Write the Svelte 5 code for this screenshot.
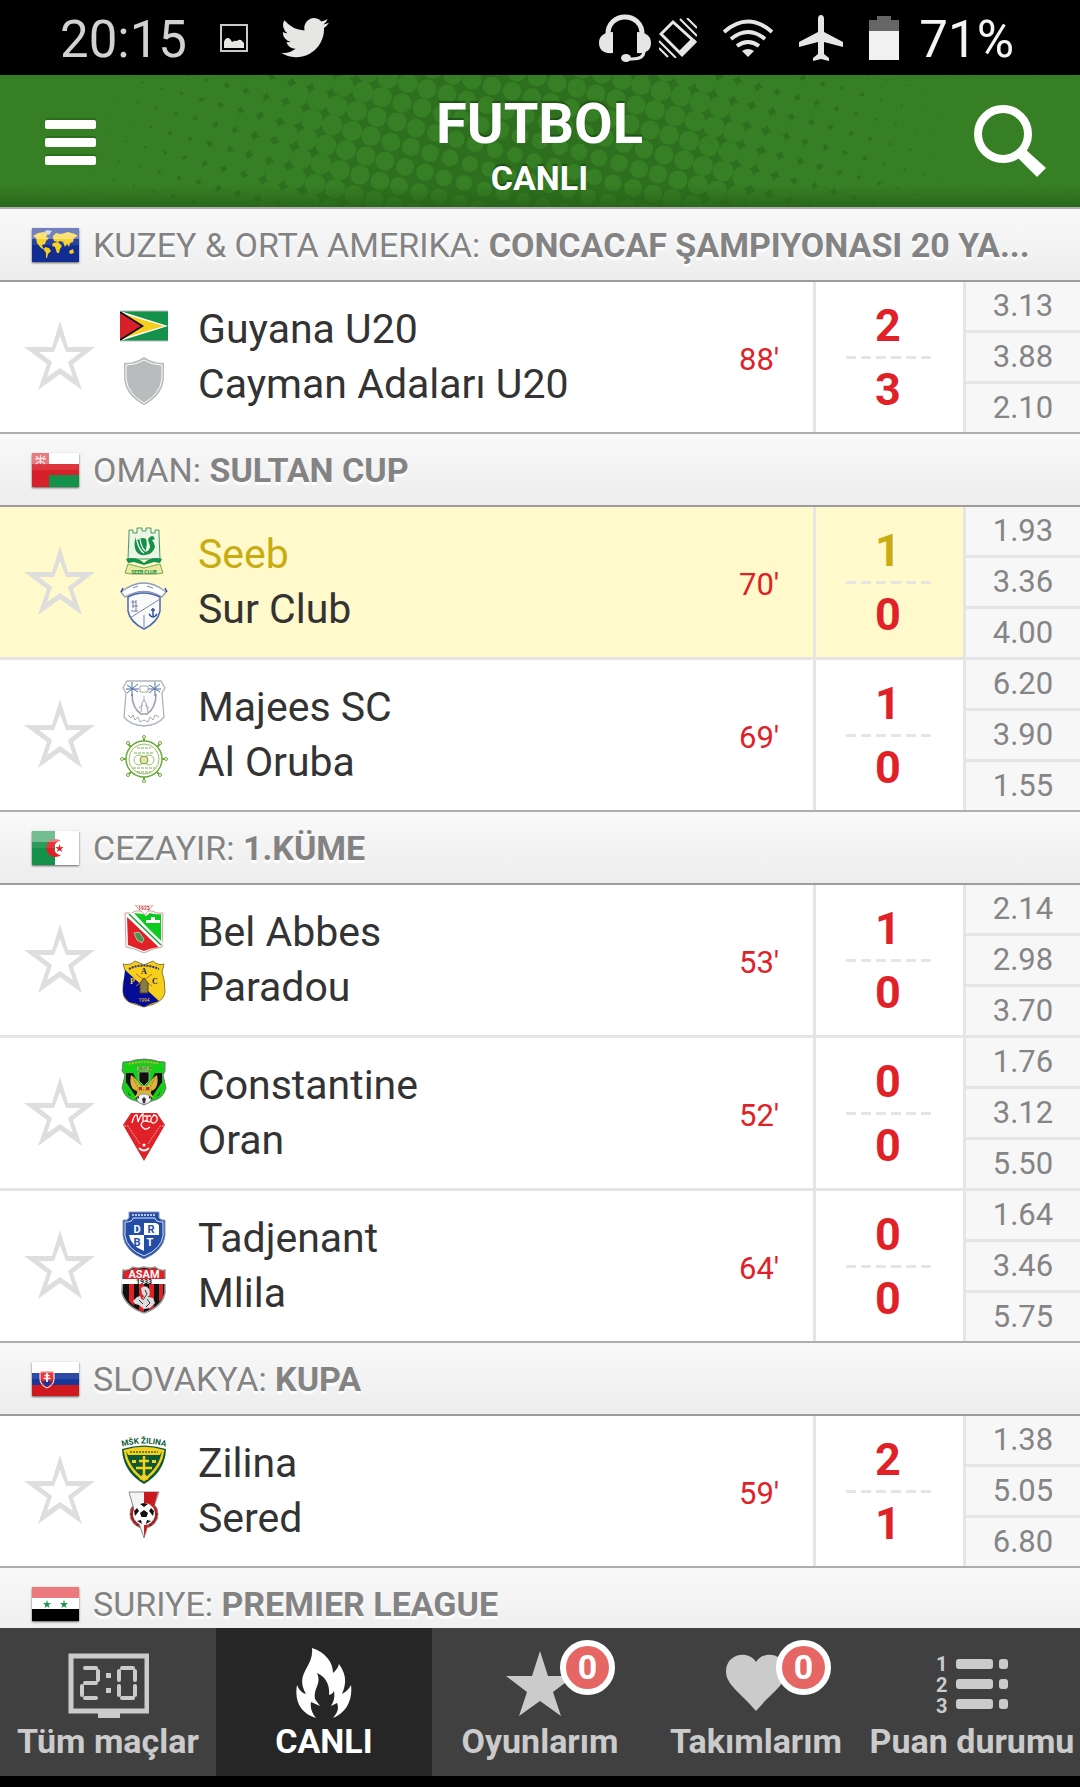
<script>
    const leagues = [
        {
            flag: 'world',
            country: 'KUZEY & ORTA AMERIKA',
            name: 'CONCACAF ŞAMPIYONASI 20 YA...',
            matches: [
                { home: 'Guyana U20', away: 'Cayman Adaları U20', minute: 88, score: [2, 3], odds: ['3.13', '3.88', '2.10'] }
            ]
        },
        {
            flag: 'oman',
            country: 'OMAN',
            name: 'SULTAN CUP',
            matches: [
                { home: 'Seeb', away: 'Sur Club', minute: 70, score: [1, 0], odds: ['1.93', '3.36', '4.00'], goal: true },
                { home: 'Majees SC', away: 'Al Oruba', minute: 69, score: [1, 0], odds: ['6.20', '3.90', '1.55'] }
            ]
        },
        {
            flag: 'algeria',
            country: 'CEZAYIR',
            name: '1.KÜME',
            matches: [
                { home: 'Bel Abbes', away: 'Paradou', minute: 53, score: [1, 0], odds: ['2.14', '2.98', '3.70'] },
                { home: 'Constantine', away: 'Oran', minute: 52, score: [0, 0], odds: ['1.76', '3.12', '5.50'] },
                { home: 'Tadjenant', away: 'Mlila', minute: 64, score: [0, 0], odds: ['1.64', '3.46', '5.75'] }
            ]
        },
        {
            flag: 'slovakia',
            country: 'SLOVAKYA',
            name: 'KUPA',
            matches: [
                { home: 'Zilina', away: 'Sered', minute: 59, score: [2, 1], odds: ['1.38', '5.05', '6.80'] }
            ]
        },
        { flag: 'syria', country: 'SURIYE', name: 'PREMIER LEAGUE', matches: [] }
    ];

    const tabs = [
        { id: 'all', label: 'Tüm maçlar' },
        { id: 'live', label: 'CANLI' },
        { id: 'games', label: 'Oyunlarım', count: 0 },
        { id: 'teams', label: 'Takımlarım', count: 0 },
        { id: 'table', label: 'Puan durumu' }
    ];

    let activeTab = $state('live');
    let favourites = $state({});

    function toggle(key) {
        favourites[key] = !favourites[key];
    }

    // halftone dots behind the title: a tilted grid, dots grow away from the middle
    const dots = [];
    for (let i = -30; i <= 30; i++) {
        for (let j = -14; j <= 14; j++) {
            const x = Math.round(540 + i * 19.7 - j * 5.6);
            const y = Math.round(66 + i * 5.5 + j * 19.5);
            if (x < -20 || x > 1100 || y < -20 || y > 152) continue;
            const r = 7 + 0.0165 * Math.hypot(x - 520, (y - 125) * 1.2);
            dots.push({ x, y, r: r.toFixed(1) });
        }
    }
</script>

{#snippet flag(id)}
    <svg class="flag" viewBox="0 0 47 34" aria-hidden="true">
        {#if id === 'world'}
            <rect width="47" height="34" fill="#112d92" />
            <path fill="#f5cf1c" d="M1 8l5-3 6-1 4 2-2 3 3 1-3 3-1 3-3 1 1 3 3 1-1 1-4-2-4-5-1-5zM13 19l4 1 2 3-3 3-1 4h-1v-5l-2-3zM21 8l3-3 5 1 7-2 7 2 3 2-4 2-1 4-3 1-1 4-2-3-2 3-2-5-3-1-2 1-4-1-1-3zM21 15l5-1 4 4-2 3-1 4h-2l-2-6-3-1zM37 23l4-2 1 4-4 1z" />
            <path fill="#b5bfdb" d="M12 4l3-2 5 1-3 4z" />
        {:else if id === 'oman'}
            <rect width="47" height="34" fill="#fff" />
            <path fill="#d8202a" d="M0 0h17v11h30v11H17v12H0z" />
            <path fill="#14914a" d="M17 22h30v12H17z" />
            <path stroke="#fbd3cd" stroke-width="1.3" fill="none" d="M4 3l9 8M13 3l-9 8M8.500 2v9M3 6h3M11 6h3" />
        {:else if id === 'algeria'}
            <rect width="47" height="34" fill="#fff" />
            <path fill="#14914a" d="M0 0h23v34H0z" />
            <path fill="#e02228" d="M29 10a9 9 0 1 0 0 14 7 7 0 1 1 0-14z" />
            <path fill="#e02228" d="M27.500 13l1 3h3.200l-2.500 2 .8 3-2.500-1.800L25 21l.8-3-2.600-2h3.300z" />
        {:else if id === 'slovakia'}
            <rect width="47" height="34" fill="#fff" />
            <path fill="#173899" d="M0 11h47v12H0z" />
            <path fill="#d0191f" d="M0 23h47v11H0z" />
            <path fill="#e02228" stroke="#fff" d="M8 9h14v8q0 6-7 9-7-3-7-9z" />
            <path fill="#173899" d="M10 20q5-3 10 0-2 3-5 5-3-2-5-5z" />
            <path stroke="#fff" stroke-width="1.700" d="M15 11v9M12.500 13.500h5M11.500 16.500h7" />
        {:else}
            <rect width="47" height="34" fill="#fff" />
            <path fill="#df2028" d="M0 0h47v11H0z" />
            <path fill="#000" d="M0 22h47v12H0z" />
            <path fill="#14914a" d="M15 13l1 3h3.200l-2.600 2 1 3-2.600-1.800L12.400 21l1-3-2.600-2H14zM32 13l1 3h3.200l-2.600 2 1 3-2.600-1.800L29.400 21l1-3-2.600-2H31z" />
        {/if}
        <rect width="47" height="11" fill="#fff" opacity="0.400" />
        <rect x="0" y="11" width="47" height="6" fill="#fff" opacity="0.100" />
    </svg>
{/snippet}

{#snippet crest(team)}
    <svg class="crest" viewBox="0 0 48 48" aria-hidden="true">
        {#if team === 'Guyana U20'}
            <rect y="9" width="48" height="30" fill="#14914a" />
            <path fill="#fff" d="M0 9l48 15L0 39z" />
            <path fill="#f5cf1c" d="M0 11l44 13L0 37z" />
            <path fill="#000" d="M0 9l24 15L0 39z" />
            <path fill="#d8202a" d="M0 11l21 13L0 37z" />
            <path stroke="#b9bcba" d="M0 9h48M0 39h48" />
        {:else if team === 'Cayman Adaları U20'}
            <path fill="#b9bcbd" d="M24 0q9 6 20 6v16q-2 17-20 26Q6 39 4 22V6q11 0 20-6z" />
            <path fill="none" stroke="#fff" d="M24 3q8 5 18 5v14q-2 15-18 24Q8 37 6 22V8q10 0 18-5z" />
        {:else if team === 'Seeb'}
            <path fill="#eef4e4" stroke="#3f9a6a" d="M9 7V3h4v3h4V1h5v3h4V1h5v5h4V3h4v4l1 25H8z" />
            <path fill="#14914a" d="M16 10q-3 7 0 14 3 5 9 4 8-1 10-8-1-5-3-7l3-1-2-3q-4 0-5 4l2 6q0 5-5 6 3-7 1-13-4-3-10 2z" />
            <path fill="none" stroke="#fff" stroke-width="1.200" d="M17 14q2 9 7 12M20 12q1 8 5 12" />
            <path fill="#14914a" d="M6 32q10-3 18 4 8-7 18-4l-2 4-6-1-10 3-10-3-6 1z" />
            <path fill="#e9e9a0" stroke="#78a84e" d="M8 37l-3 9 6 1h26l6-1-3-9-16 4z" />
            <text x="24" y="47" text-anchor="middle" font-size="5" font-weight="700" fill="#14914a">SEEB CLUB</text>
        {:else if team === 'Sur Club'}
            <path fill="#fff" stroke="#8f9bb8" stroke-width="1.300" d="M1 10Q24-8 46 10l-4 5Q24 4 5 15z" />
            <path fill="#fafafa" stroke="#4c69ae" stroke-width="1.500" d="M8 15q15-8 32 0v14q-2 11-16 18Q10 40 8 29z" />
            <path fill="none" stroke="#7b86a0" d="M10 36L40 17M24 33v12M13 18v8M11 20h5M11 29h7M12 24h6M16 18v12M13 6l5-2M27 4l6 2" />
            <path fill="none" stroke="#2c4fa5" stroke-width="1.500" d="M33 26v9M29 32q4 6 8 0M31 28h4M3 6l-2 4M45 6l2 4" />
        {:else if team === 'Majees SC'}
            <path fill="#fff" stroke="#aeb4bd" stroke-width="1.300" d="M7 1h34l4 7-3 5 2 24q-6 8-20 9Q10 45 4 37l2-24-3-5z" />
            <path fill="#fbfbfb" stroke="#9ba1ab" stroke-width="1.600" d="M12 14q0 14 9 20h6q9-6 9-20" />
            <path stroke="#4f6ca3" d="M7 5l11 7M18 4L7 13M12 2v14M6 9h13M29 5l11 7M40 4l-11 9M35 2v14M28 9h13" />
            <path stroke="#a5aab2" fill="none" d="M20 6h8v6h-8zM24 16v5M21 32l1-9 2-3 2 3 2 9M19 28l4-3M29 28l-4-3M8 35l3 3 2-3 2 5 3-3 2 5 4-2 4 2 2-5 3 3 2-5 4 2" />
        {:else if team === 'Al Oruba'}
            <path stroke="#7c9c3f" stroke-width="2" d="M24 1v46M1 24h46M7 8l34 33M41 8L7 41" />
            <circle cx="24" cy="24" r="18" fill="#fff" stroke="#68ad3a" stroke-width="1.500" />
            <circle cx="24" cy="24" r="15" fill="none" stroke="#9dbc67" />
            <circle cx="19" cy="25" r="5" fill="none" stroke="#9dbc67" />
            <circle cx="29" cy="25" r="5" fill="none" stroke="#9dbc67" />
            <circle cx="24" cy="25" r="4" fill="#e4e3a0" stroke="#7c9c3f" />
            <path stroke="#7fb04b" stroke-dasharray="3 1" d="M17 13h14M14 18h20M13 33h22M17 37h14" />
            <g fill="#fff" stroke="#68ad3a"><circle cx="24" cy="2" r="1.500" /><circle cx="2" cy="24" r="1.500" /><circle cx="46" cy="24" r="1.500" /><circle cx="24" cy="46" r="1.500" /><circle cx="8" cy="8" r="1.500" /><circle cx="40" cy="8" r="1.500" /><circle cx="8" cy="40" r="1.500" /><circle cx="40" cy="40" r="1.500" /></g>
        {:else if team === 'Bel Abbes'}
            <path fill="#fff" stroke="#d99a98" d="M5 8q7 1 11-2h16q4 3 11 2l-1 34q-8 1-18 6-10-5-18-6z" />
            <path fill="#e02228" d="M7 12l32 30q-8 1-15 4-8-3-16-6z" />
            <path fill="#0bcb1e" d="M14 8l9 1 3 2 4-3q6 2 11 1v29z" />
            <path stroke="#fff" stroke-width="6" d="M9 9l32 31" />
            <path stroke="#18a738" stroke-width="1.500" d="M9 9l32 31" />
            <path fill="#fff" stroke="#d99a98" d="M15 0h18l-8 10z" />
            <text x="24" y="5" text-anchor="middle" font-size="5" font-weight="700" fill="#c73a35">1923</text>
            <path fill="#fff" d="M26 15h14v3H26zM31 12h4v3h-4z" />
            <path fill="#3f9a51" stroke="#fff" stroke-width=".5" d="M14 28l5-1 5 7-2 4-5-3z" />
        {:else if team === 'Paradou'}
            <path fill="#f5cf1c" stroke="#8a7c33" d="M3 4q7 2 12-3l9 4 9-4q5 5 11 3l-2 8q3 8 3 20-1 8-11 12l-10 3-10-3Q3 41 3 32q-1-9 3-19z" />
            <path fill="#050c96" d="M5 10l34 31q-7 2-15 6-8-4-15-5-7-6-6-14z" />
            <path fill="none" stroke="#30306e" stroke-width="2" stroke-dasharray="2 1" d="M9 9q14-7 30 0" />
            <path stroke="#c66a35" d="M16 14l16 12M32 14L16 26" />
            <path fill="#867b49" stroke="#4b4420" d="M20 33v-10l4-5 4 5v10z" />
            <g font-family="Liberation Serif, serif" font-size="8" font-weight="700"><text x="21" y="14" fill="#1b1b60">A</text><text x="10" y="24" fill="#f5cf1c">P</text><text x="32" y="24" fill="#1b1b60">C</text></g>
            <text x="24" y="42" text-anchor="middle" font-size="5" fill="#f5cf1c">1994</text>
        {:else if team === 'Constantine'}
            <path fill="#15cf18" stroke="#777" d="M3 4q8 0 12-2 9-2 18 0 5 2 12 2v9l-2 4 3 13q-3 11-14 13l-8 4-8-4Q5 41 2 30l3-13-3-4z" />
            <path fill="#111" d="M6 15h7l4 8v19l-8-5-3-9zM42 15h-7l-4 8v19l8-5 3-9z" />
            <path stroke="#15cf18" stroke-width="4" d="M5 26l10 15M43 26L33 41" />
            <path fill="#d9b43c" d="M11 17l4 3 6 8h6l6-8 4-3q2 9-2 14l-5 3 4 6-5-2H19l-5 2 4-6-5-3q-4-5-2-14z" />
            <path stroke="#8a6a1c" stroke-dasharray="1 1" d="M13 20l6 11M35 20l-6 11M15 32h18" />
            <path fill="#111" stroke="#ddd" stroke-width=".6" d="M19 14h10v9l-5 5-5-5z" />
            <text x="24" y="13" text-anchor="middle" font-size="8" font-weight="700" fill="#f4e7b2" stroke="#4b3f20" stroke-width=".3">CSC</text>
            <path stroke="#d9b43c" stroke-width="1.500" fill="none" stroke-dasharray="2 1" d="M9 6q15-4 30 0" />
            <path fill="#d32620" d="M19 29h3v3h-3zM26 29h3v3h-3z" />
            <ellipse cx="24" cy="41" rx="7" ry="5" fill="#f2f2f2" stroke="#999" />
            <path fill="#333" d="M22 41l2-2 2 2-1 4h-2zM17 39l2-1v3zM31 39l-2-1v3z" />
        {:else if team === 'Oran'}
            <path fill="#e02228" d="M11 0h26l8 12-21 36L3 12z" />
            <path fill="none" stroke="#fff" stroke-width="1.300" d="M12 10q2-9 5-8l1 7q3-8 5-8v8M24 3h7M27 3v6M35 2q-5 2-4 7 4 3 6-2 1-5-4-5M30 9q-8-3-9 3 3 7 9 2" />
            <path fill="none" stroke="#f7aaa8" stroke-dasharray="2 1" d="M4 13h4l12 18M44 13h-4L28 31" />
            <path fill="none" stroke="#fff" stroke-width="1.800" d="M19 35q5 5 10 0" />
            <circle cx="24" cy="32" r="1.500" fill="#fff" />
        {:else if team === 'Tadjenant'}
            <path fill="#244ea6" stroke="#8c98b5" d="M9 1h30v6q3 3 6 2v16Q43 40 24 48 5 40 3 25V9q4 1 6-2z" />
            <path fill="none" stroke="#dfe6f5" d="M5 11q8 0 8-4h22q0 4 8 4v14Q41 38 24 45 7 38 5 25z" />
            <path fill="#fff" d="M24 12h12l3 2v10H24zM9 24h15v16q-13-5-15-16z" />
            <g font-size="11" font-weight="700" text-anchor="middle"><text x="17" y="22" fill="#fff">D</text><text x="31" y="22" fill="#244ea6">R</text><text x="17" y="35" fill="#244ea6">B</text><text x="30" y="35" fill="#fff">T</text></g>
            <path stroke="#b9c6e4" stroke-width="2" stroke-dasharray="2 1" d="M12 4h24" />
        {:else if team === 'Mlila'}
            <path fill="#111" stroke="#9a9a9a" stroke-width="1.500" d="M3 4q6 1 10-3 4 2 11 0 7 2 11 0 4 4 10 3v23q-3 14-21 20Q6 41 2 27z" />
            <path fill="#e02228" d="M4 5q6 0 10-3 4 2 10 1 6 1 10-1 4 3 10 3v8H4zM9 18h5v22l-5-5zM19 18h5v28l-5-2zM29 18h5v23l-5 3zM39 18h4v13l-4 5z" />
            <path fill="#fff" d="M2 13h44v5H2z" />
            <text x="24" y="12" text-anchor="middle" font-size="11" font-weight="700" fill="#fff">ASAM</text>
            <text x="24" y="18" text-anchor="middle" font-size="7" font-weight="700" fill="#111">1933</text>
            <path fill="#ddd" d="M21 22q5-4 8 1 2 5-1 8l5 1 2 5-5 5-6 1-5-4-4-1-2-3 4-4 3-1 2 4 2-4-2-2z" />
            <path fill="none" stroke="#333" d="M25 24l2 4-4 6M19 34l4 4M27 33l3 4-4 4" />
        {:else if team === 'Zilina'}
            <path id="arc" fill="none" d="M1 11q23-7 46 0" />
            <text font-size="8" font-weight="700" fill="#0b5a35" text-anchor="middle"><textPath href="#arc" startOffset="50%">MŠK ŽILINA</textPath></text>
            <path fill="#0b5a35" d="M2 13q22-7 44 0-1 23-22 35Q3 36 2 13z" />
            <path fill="none" stroke="#f5cf1c" stroke-width="2.500" d="M5 15q19-6 38 0-2 17-19 29Q7 32 5 15z" />
            <path fill="#f5cf1c" d="M6 14q18-5 36 0l-2 5H8z" />
            <path stroke="#476c2f" stroke-width="1.500" stroke-dasharray="2 1" d="M10 16h28" />
            <path fill="none" stroke="#f5cf1c" stroke-width="2.500" d="M24 20v22M19 25h10M16 32h16M20 43l4-4 4 4" />
            <path fill="#f5cf1c" d="M12 24h4v3h-4zM32 24h4v3h-4z" />
        {:else}
            <circle cx="24" cy="23" r="14" fill="#c9181e" stroke="#8d8080" />
            <path fill="#f4f4f4" stroke="#888" d="M9 1h30l-5 14L24 47 13 15z" />
            <path fill="#c9181e" d="M24 1h14l-4 14-10 31z" />
            <path fill="none" stroke="#7a2a2a" stroke-width="3" stroke-dasharray="2 2" d="M12 22q1 10 8 13M36 22q-1 10-8 13" />
            <circle cx="24" cy="23" r="11" fill="#fff" />
            <path fill="#111" d="M24 19l4 3-1.500 4h-5L20 22zM20 13l4-1 4 1-4 3zM14 20l3-3 2 3-4 5zM34 20l-3-3-2 3 4 5zM17 30l4-1 1 4zM31 30l-4-1-1 4z" />
        {/if}
    </svg>
{/snippet}

<div class="app">
    <div class="status">
        <time>20:15</time>
        <svg width="28" height="28" viewBox="0 0 28 28" aria-hidden="true">
            <rect x="1" y="1" width="26" height="26" fill="none" stroke="#c9c9c9" stroke-width="2" />
            <path fill="#e6e6e5" d="M4 24v-6q1-4 4-4 2 0 4 4 3-2 5-1 2-2 4-1l3 3v5z" />
        </svg>
        <svg width="48" height="40" viewBox="0 0 24 20" aria-hidden="true">
            <path fill="#e6e6e5" d="M24 2.400a9.800 9.800 0 0 1-2.800.8A4.900 4.900 0 0 0 23.300.5a9.900 9.900 0 0 1-3.100 1.200 4.900 4.900 0 0 0-8.400 4.500A14 14 0 0 1 1.700 1.100a4.900 4.900 0 0 0 1.500 6.500A4.900 4.900 0 0 1 .9 7v.1a4.900 4.900 0 0 0 4 4.800 4.900 4.900 0 0 1-2.200.1 4.900 4.900 0 0 0 4.600 3.400A9.900 9.900 0 0 1 0 17.400 14 14 0 0 0 21.500 5a10 10 0 0 0 2.500-2.600z" />
        </svg>
        <div class="system">
            <div class="pair">
                <svg width="52" height="48" viewBox="0 0 52 48" aria-hidden="true">
                    <path fill="none" stroke="#e6e6e5" stroke-width="5" d="M9 21C8-3 44-3 43 21" />
                    <path fill="#e6e6e5" d="M14 18v21C5 40 0 36 0 29s5-11 14-11zM38 18v21c9 1 14-3 14-10s-5-11-14-11z" />
                    <path fill="none" stroke="#e6e6e5" stroke-width="3" d="M45 37q0 8-12 8h-6" />
                    <ellipse cx="27" cy="44" rx="5" ry="4" fill="#e6e6e5" />
                </svg>
                <svg width="38" height="40" viewBox="0 0 38 40" aria-hidden="true">
                    <path fill="none" stroke="#e6e6e5" stroke-width="3" d="M14 4L2 16l21 21 13-13z" />
                    <path fill="#e6e6e5" d="M37 23L23 38l-4-4 14-14z" />
                    <path stroke="#e6e6e5" stroke-width="2" d="M21 1l17 17M28 0l10 10M0 23l17 17M0 30l9 9" />
                </svg>
            </div>
            <svg width="50" height="38" viewBox="0 0 50 38" aria-hidden="true">
                <path fill="none" stroke="#e6e6e5" stroke-width="4" d="M1 13Q25-8 49 13M8 20q17-14 34 0M14 27q11-8 22 0" />
                <path fill="#e6e6e5" d="M25 38l-6-6q6-4 12 0z" />
            </svg>
            <svg width="44" height="46" viewBox="0 0 44 46" aria-hidden="true">
                <path fill="#e6e6e5" d="M22 0q3 0 3 4v13l19 10v5l-19-5v12l5 4v3l-8-2-8 2v-3l5-4V27L0 32v-5l19-10V4q0-4 3-4z" />
            </svg>
            <div class="battery">
                <svg width="30" height="44" viewBox="0 0 30 44" aria-hidden="true">
                    <path fill="#666" d="M8 0h14v4h8v12H0V4h8z" />
                    <path fill="#f1f1f1" d="M0 15h30v29H0z" />
                </svg>
                <span>71%</span>
            </div>
        </div>
    </div>

    <header>
        <svg class="halftone" viewBox="0 0 1080 132" preserveAspectRatio="xMidYMid slice" aria-hidden="true">
            {#each dots as dot}
                <circle cx={dot.x} cy={dot.y} r={dot.r} />
            {/each}
        </svg>
        <button class="icon-button" aria-label="Menü">
            <svg width="52" height="48" viewBox="0 0 52 48" aria-hidden="true">
                <path fill="#1f5a17" opacity=".5" d="M1 1h50v9H1zM1 19h50v9H1zM1 37h50v9H1z" />
                <g fill="#fff"><rect y="3" width="51" height="9" rx="2" /><rect y="21" width="51" height="9" rx="2" /><rect y="39" width="51" height="9" rx="2" /></g>
            </svg>
        </button>
        <div class="title">
            <h1>FUTBOL</h1>
            <p>CANLI</p>
        </div>
        <button class="icon-button" aria-label="Ara">
            <svg width="72" height="72" viewBox="0 0 72 72" aria-hidden="true">
                <circle cx="29" cy="29" r="25" fill="none" stroke="#fff" stroke-width="8" />
                <path fill="#fff" d="M42 51l8-8 22 20-9 9z" />
            </svg>
        </button>
    </header>

    <main>
        {#each leagues as league}
            <section>
                <h2>
                    {@render flag(league.flag)}
                    <span class="league"><span>{league.country}:</span> <b>{league.name}</b></span>
                </h2>
                {#if league.matches.length}
                    <ul>
                        {#each league.matches as match}
                            <li class="match" class:goal={match.goal}>
                                <button
                                    class="star"
                                    class:on={favourites[match.home]}
                                    aria-label="Favori: {match.home}"
                                    onclick={() => toggle(match.home)}
                                >
                                    <svg width="72" height="72" viewBox="0 0 72 72" aria-hidden="true">
                                        <path class="inner" d="M36 14l6 17h15L44 41l5 16-13-10-13 10 5-16-13-10h15z" />
                                        <path fill-rule="evenodd" d="M36 0l8 26h27L49 43l9 26-22-16-22 16 9-26L0 26h28zM36 15l-6 16H15l13 10-5 15 13-9 13 9-5-15 13-10H42z" />
                                    </svg>
                                </button>
                                <div class="crests">
                                    {@render crest(match.home)}
                                    {@render crest(match.away)}
                                </div>
                                <div class="teams">
                                    <span class="home">{match.home}</span>
                                    <span>{match.away}</span>
                                </div>
                                <span class="minute">{match.minute}'</span>
                                <div class="score">
                                    <b class="home">{match.score[0]}</b>
                                    <i></i>
                                    <b>{match.score[1]}</b>
                                </div>
                                <div class="odds">
                                    {#each match.odds as odd}
                                        <span>{odd}</span>
                                    {/each}
                                </div>
                            </li>
                        {/each}
                    </ul>
                {/if}
            </section>
        {/each}
    </main>

    <nav>
        {#each tabs as tab}
            <a href="#{tab.id}" class:active={activeTab === tab.id} onclick={() => (activeTab = tab.id)}>
                <span class="tab-icon">
                    {#if tab.id === 'all'}
                        <svg width="82" height="70" viewBox="0 0 82 70" aria-hidden="true">
                            <rect x="4" y="8" width="76" height="55" fill="none" stroke="#cbcbcb" stroke-width="5" />
                            <path fill="#cbcbcb" d="M31 63h22v7H31z" />
                            <path fill="none" stroke="#cbcbcb" stroke-width="4" stroke-linecap="round" d="M18 20h11M31 23v9M18 35h11M15 38v9M18 50h11M55 20h11M52 23v9M68 23v9M52 38v9M68 38v9M55 50h11" />
                            <path fill="#cbcbcb" d="M39 25h5v5h-5zM39 40h5v5h-5z" />
                        </svg>
                    {:else if tab.id === 'live'}
                        <svg width="56" height="70" viewBox="0 0 56 70" aria-hidden="true">
                            <path fill="#fff" d="M16 0c13 4 21 14 21 25 3-3 5-5 6-9 7 10 8 18 3 30 4-2 7-5 9-9 2 15-5 28-18 33 5-6 6-10 4-15l-6 3c3-5 4-9 3-15-1 2-2 3-5 4 1-10-3-18-12-22 5 11-4 15-2 26l5 7-9-4c-1 6 1 11 5 16C5 66-2 53 1 37c2 5 5 8 9 9-12-21 8-26 6-46z" />
                        </svg>
                    {:else if tab.id === 'games'}
                        <svg width="70" height="70" viewBox="0 0 70 70" aria-hidden="true">
                            <path fill="#cbcbcb" d="M35 3l8 25h26L48 44l8 24-21-15-21 15 8-24L1 28h26z" />
                        </svg>
                    {:else if tab.id === 'teams'}
                        <svg width="62" height="70" viewBox="0 0 62 70" aria-hidden="true">
                            <path fill="#cbcbcb" d="M31 14C23 1 1 6 1 23c0 14 13 20 30 40 17-20 30-26 30-40C61 6 39 1 31 14z" />
                        </svg>
                    {:else}
                        <svg width="72" height="70" viewBox="0 0 72 70" aria-hidden="true">
                            <g fill="#cbcbcb">
                                <g font-size="20" font-weight="700"><text x="0" y="23">1</text><text x="0" y="44">2</text><text x="0" y="65">3</text></g>
                                <rect x="20" y="11" width="37" height="10" rx="3" /><rect x="63" y="11" width="9" height="10" rx="3" />
                                <rect x="20" y="31" width="37" height="10" rx="3" /><rect x="63" y="31" width="9" height="10" rx="3" />
                                <rect x="20" y="51" width="37" height="10" rx="3" /><rect x="63" y="51" width="9" height="10" rx="3" />
                            </g>
                        </svg>
                    {/if}
                    {#if tab.count !== undefined}
                        <span class="badge">{tab.count}</span>
                    {/if}
                </span>
                <span>{tab.label}</span>
            </a>
        {/each}
    </nav>
</div>

<style>
    :global(body) {
        background: #000;
        font-family: Roboto, "Liberation Sans", sans-serif;
    }
    .app {
        display: flex;
        flex-direction: column;
        height: 100vh;
        padding-bottom: 11px;
        box-sizing: border-box;
    }
    h1, h2, p, ul {
        margin: 0;
        padding: 0;
        list-style: none;
    }
    svg {
        display: block;
        flex: none;
    }
    button {
        border: 0;
        padding: 0;
        background: none;
        cursor: pointer;
    }

    /* status bar */
    .status {
        display: flex;
        flex: none;
        align-items: center;
        gap: 33px;
        height: 75px;
        padding: 0 66px 0 60px;
        color: #f5f5f5;
        font-size: 51px;
    }
    .status time,
    .status span {
        padding-top: 4px;
    }
    .status time {
        color: #d2d2d3;
    }
    .system {
        display: flex;
        align-items: center;
        gap: 26px;
        margin-left: auto;
    }
    .pair {
        display: flex;
        align-items: center;
        gap: 8px;
    }
    .battery {
        display: flex;
        align-items: center;
        gap: 20px;
    }

    /* title bar */
    header {
        position: relative;
        display: flex;
        flex: none;
        align-items: center;
        justify-content: space-between;
        height: 132px;
        padding: 0 34px 0 45px;
        background: #2d6f1e;
        color: #fff;
    }
    header::after {
        content: "";
        position: absolute;
        left: 0;
        right: 0;
        bottom: 0;
        height: 22px;
        background: linear-gradient(rgba(38, 98, 25, 0), rgba(38, 98, 25, 0.8));
    }
    .halftone {
        position: absolute;
        left: 0;
        top: 0;
        width: 100%;
        height: 100%;
        fill: #377f24;
    }
    .icon-button {
        position: relative;
        width: 72px;
        z-index: 1;
    }
    .title {
        position: relative;
        z-index: 1;
        padding: 6px 12px 0 0;
        text-align: center;
        text-shadow: 0 -2px 1px rgba(20, 70, 15, 0.7);
    }
    h1 {
        font-size: 56px;
        line-height: 67px;
    }
    .title p {
        font-size: 34px;
        line-height: 40px;
        font-weight: 700;
    }

    /* league heading */
    main {
        flex: 1;
        min-height: 0;
        overflow-y: auto;
        scrollbar-width: none;
        background: #fff;
    }
    h2 {
        display: flex;
        align-items: center;
        gap: 14px;
        height: 71px;
        padding: 0 32px;
        border-top: 2px solid #aeaeae;
        border-bottom: 2px solid #9c9c9e;
        background: linear-gradient(#f9f9f9, #ededed);
        color: #838383;
        font-size: 34px;
        font-weight: 400;
        text-shadow: 0 3px 1px #fff;
    }
    .flag {
        width: 47px;
        height: 34px;
        box-shadow: 0 1px 2px rgba(0, 0, 0, 0.6);
    }
    .league {
        overflow: hidden;
        white-space: nowrap;
        text-overflow: ellipsis;
        line-height: 48px;
    }

    /* match row */
    .match {
        display: flex;
        height: 150px;
        color: #333;
    }
    .match + .match {
        border-top: 3px solid #e5e5e5;
    }
    .goal {
        background: #fff9cb;
    }
    .goal .home {
        color: #c9ab12;
    }
    .star {
        padding: 0 24px;
        fill: #dededc;
    }
    .star .inner {
        fill: none;
    }
    .star.on .inner {
        fill: #dededc;
    }
    .crests {
        display: flex;
        flex-direction: column;
        gap: 7px;
        padding-top: 20px;
    }
    .crest {
        width: 48px;
        height: 48px;
    }
    .teams {
        display: flex;
        flex: 1;
        flex-direction: column;
        justify-content: center;
        min-width: 0;
        padding-left: 30px;
        font-size: 41px;
        line-height: 55px;
        white-space: nowrap;
    }
    .minute {
        align-self: center;
        width: 74px;
        padding-top: 4px;
        color: #e02228;
        font-size: 31px;
    }
    .score {
        display: flex;
        flex-direction: column;
        align-items: center;
        justify-content: center;
        width: 144px;
        padding-right: 3px;
        border: solid #e5e5e3;
        border-width: 0 3px;
        color: #e02228;
        font-size: 45px;
        line-height: 61px;
    }
    .score i {
        width: 85px;
        height: 3px;
        background: repeating-linear-gradient(90deg, #e5e5e3 0 10px, transparent 10px 15px);
    }
    .odds {
        display: grid;
        grid-template-rows: repeat(3, 1fr);
        gap: 3px;
        width: 114px;
        background: #e5e5e3;
        color: #858585;
        font-size: 31px;
        line-height: 48px;
        text-align: center;
    }
    .odds span {
        background: #f7f7f7;
    }

    /* bottom tabs */
    nav {
        display: grid;
        flex: none;
        grid-template-columns: repeat(5, minmax(0, 1fr));
        height: 148px;
        background: #404040;
    }
    nav a {
        display: flex;
        flex-direction: column;
        align-items: center;
        padding-top: 20px;
        color: #cbcbcb;
        font-size: 34px;
        font-weight: 700;
        line-height: 46px;
        text-decoration: none;
        white-space: nowrap;
    }
    nav a.active {
        background: #262626;
        color: #fff;
    }
    .tab-icon {
        position: relative;
    }
    .badge {
        position: absolute;
        left: 50%;
        top: -8px;
        width: 43px;
        height: 43px;
        margin-left: 20px;
        border: 6px solid #fff;
        border-radius: 50%;
        background: #e66664;
        color: #fff;
        line-height: 43px;
        text-align: center;
    }
</style>
